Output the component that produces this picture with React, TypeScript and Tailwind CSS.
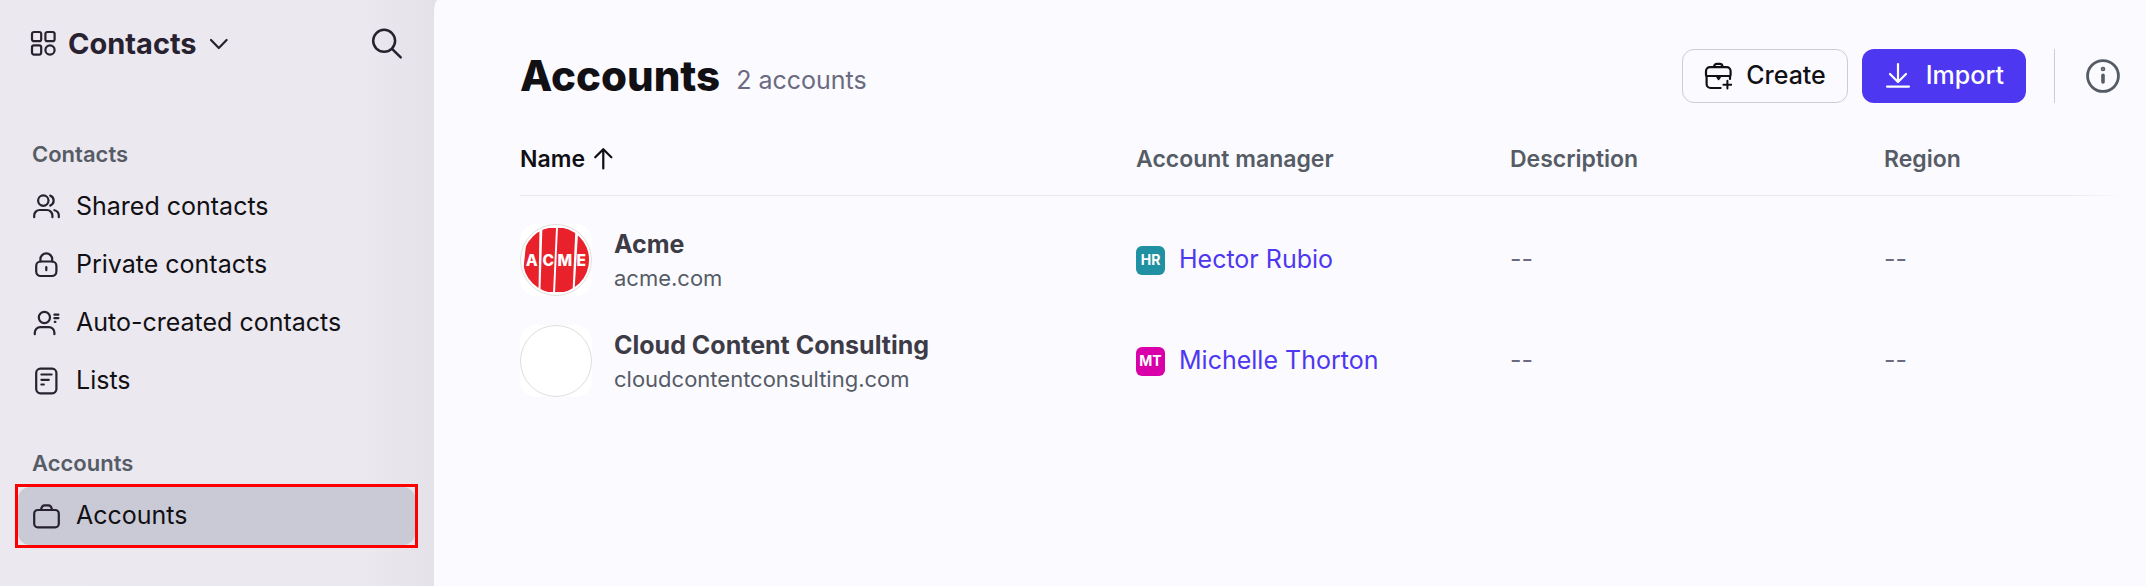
import React from "react";

interface IconProps {
  children: React.ReactNode;
  size?: string;
}

function Icon({ children, size = "size-7" }: IconProps) {
  return (
    <svg
      viewBox="0 0 28 28"
      fill="none"
      stroke="currentColor"
      strokeWidth="2.2"
      strokeLinecap="round"
      strokeLinejoin="round"
      aria-hidden="true"
      className={`${size} shrink-0`}
    >
      {children}
    </svg>
  );
}

const contactLinks = [
  {
    label: "Shared contacts",
    icon: (
      <Icon>
        <circle cx="11.3" cy="7.6" r="5.2" />
        <path d="M18.2 2.6c4.6 1.6 4.6 8.4 0 10" />
        <path d="M2.2 24.2v-1.7a5.5 5.5 0 0 1 5.5-5.5h7.2a5.5 5.5 0 0 1 5.5 5.5v1.7" />
        <path d="M22.4 17.2c2.8.7 4.4 2.8 4.4 5.3v1.7" />
      </Icon>
    ),
  },
  {
    label: "Private contacts",
    icon: (
      <Icon>
        <rect x="4.2" y="10.5" width="20.2" height="14.5" rx="4.5" />
        <path d="M8.4 10.5V8.3a5.9 5.9 0 0 1 11.8 0v2.2" />
        <path d="M14.3 16.2v3" />
      </Icon>
    ),
  },
  {
    label: "Auto-created contacts",
    icon: (
      <Icon>
        <circle cx="12.4" cy="8.5" r="5.6" />
        <path d="M2.8 25.2v-1.5a5.5 5.5 0 0 1 5.5-5.5h8.6a5.5 5.5 0 0 1 5.5 5.5v1.5" />
        <path d="M22.4 5.7h4M22.4 9.2h4M22.8 12.9h.6" />
      </Icon>
    ),
  },
  {
    label: "Lists",
    icon: (
      <Icon>
        <rect x="4.2" y="1.7" width="20.2" height="24.6" rx="4.2" />
        <path d="M9.4 7.5h10.2M9.4 12.8h7.4M9.4 17.5h2.4" />
      </Icon>
    ),
  },
];

const columns = ["Account manager", "Description", "Region"];

const accounts = [
  {
    name: "Acme",
    domain: "acme.com",
    logo: true,
    manager: "Hector Rubio",
    initials: "HR",
    badge: "bg-[#1f91a3]",
  },
  {
    name: "Cloud Content Consulting",
    domain: "cloudcontentconsulting.com",
    logo: false,
    manager: "Michelle Thorton",
    initials: "MT",
    badge: "bg-[#d900a9]",
  },
];

function AcmeLogo() {
  return (
    <svg viewBox="0 0 72 72" className="size-full" role="img" aria-label="Acme">
      <defs>
        <clipPath id="acme-round">
          <circle cx="36" cy="36" r="34" />
        </clipPath>
      </defs>
      <g clipPath="url(#acme-round)">
        <g fill="#e9212b">
          <path d="M7 3h12l-1 66H0z" />
          <path d="M22 3h14l-3 66H20z" />
          <path d="M38 3h18l-3 66H35z" />
          <path d="M59 3h13v66H55z" />
        </g>
        <g
          fill="#fff"
          fontFamily="Inter, sans-serif"
          fontSize="16"
          fontWeight="800"
          textAnchor="middle"
        >
          <text x="11" y="42">A</text>
          <text x="28" y="42">C</text>
          <text x="45" y="42">M</text>
          <text x="62" y="42">E</text>
        </g>
      </g>
    </svg>
  );
}

function Sidebar() {
  return (
    <aside className="w-[434px] shrink-0 bg-linear-to-r from-[#ebe8ef] from-84% to-[#e4e2e8] pt-4 pr-[19px] pl-[18px]">
      <div className="flex h-14 items-center justify-between px-3">
        <button className="flex items-center gap-2.5 text-[29px] font-bold text-[#272130]">
          <Icon>
            <rect x="2" y="2" width="9.2" height="9.2" rx="2" />
            <rect x="15.4" y="2" width="9.2" height="9.2" rx="2" />
            <rect x="2" y="15.4" width="9.2" height="9.2" rx="2" />
            <circle cx="20" cy="20" r="4.6" />
          </Icon>
          Contacts
          <Icon>
            <path d="M4 10l7.8 8 7.8-8" />
          </Icon>
        </button>
        <button aria-label="Search" className="text-[#272130]">
          <Icon size="size-8">
            <circle cx="11.5" cy="11.2" r="9.6" />
            <path d="M18.4 18.2l7.6 7.6" />
          </Icon>
        </button>
      </div>

      <nav>
        <h2 className="mt-[58px] flex h-12 items-center pl-3.5 text-[22px] font-semibold text-[#565c66]">
          Contacts
        </h2>
        <ul>
          {contactLinks.map((link) => (
            <li key={link.label}>
              <a
                href="#"
                className="flex h-[58px] items-center gap-4 rounded-xl pl-3.5 text-[25px] text-[#111014]"
              >
                <span className="text-[#272130]">{link.icon}</span>
                {link.label}
              </a>
            </li>
          ))}
        </ul>

        <h2 className="mt-[29px] flex h-12 items-center pl-3.5 text-[22px] font-semibold text-[#565c66]">
          Accounts
        </h2>
        <ul>
          <li className="outline-3 outline-[#ff0000]">
            <a
              href="#"
              aria-current="page"
              className="flex h-[58px] items-center gap-4 rounded-xl bg-[#cacad6] pl-3.5 text-[25px] text-[#111014]"
            >
              <span className="text-[#272130]">
                <Icon>
                  <rect x="2.2" y="8" width="24.6" height="17.4" rx="3.6" />
                  <path d="M9 8c.4-3 1.6-4.6 3.6-4.6h3.8c2 0 3.2 1.6 3.6 4.6" />
                </Icon>
              </span>
              Accounts
            </a>
          </li>
        </ul>
      </nav>
    </aside>
  );
}

function Toolbar() {
  return (
    <header className="flex h-[54px] items-center justify-between pr-[25px]">
      <div className="flex items-end gap-4">
        <h1 className="text-[42px] leading-[54px] font-extrabold text-[#111014]">
          Accounts
        </h1>
        <p className="text-[25px] leading-[46px] text-[#6a6b80]">2 accounts</p>
      </div>
      <div className="flex h-full items-center">
        <button className="flex h-full items-center gap-3.5 rounded-xl border border-[#cccbd6] px-[21px] text-[25px] font-medium text-[#111014]">
          <Icon>
            <path d="M2 13V9.2a4 4 0 0 1 4-4h16.6a4 4 0 0 1 4 4V13c0 .6-.4 1-1 1H3c-.6 0-1-.4-1-1z" />
            <path d="M2.6 14v8a4 4 0 0 0 4 4h10M26 14v3" />
            <path d="M10 5c0-2 1.2-3.2 3-3.2h2.6c1.8 0 3 1.2 3 3.2" />
            <path d="M13.4 15.2h2.4l-1.2 1.8z" />
            <path d="M23.4 18.8v7.8M19.4 22.7h8" strokeWidth="2" />
          </Icon>
          Create
        </button>
        <button className="ml-3.5 flex h-full items-center gap-3.5 rounded-xl bg-[#4e37f0] px-[22px] text-[25px] font-medium text-white">
          <Icon>
            <path d="M14 2v17.6M6 12l8 8 8-8M3 24.6h22" />
          </Icon>
          Import
        </button>
        <span className="ml-7 h-full w-px bg-[#cccbd6]" />
        <button aria-label="Information" className="ml-[30px] text-[#565c66]">
          <Icon size="size-9">
            <circle cx="14" cy="14" r="12" />
            <circle cx="14" cy="8.6" r=".7" />
            <path d="M14 13.4v5.2" strokeWidth="2.8" />
          </Icon>
        </button>
      </div>
    </header>
  );
}

function AccountsTable() {
  return (
    <div className="relative mt-[21px]">
      <table className="w-full table-fixed text-left">
        <thead>
          <tr className="h-[71px] border-b border-[#e8e7ed] text-[23px] text-[#565c66]">
            <th className="w-[616px] p-0 font-semibold text-[#111014]">
              <button className="flex items-center gap-2">
                Name
                <Icon size="size-6">
                  <path
                    d="M12 25V3.500M2.600 12L12 2.600l9.400 9.400"
                    strokeWidth="2.6"
                  />
                </Icon>
              </button>
            </th>
            {columns.map((column) => (
              <th
                key={column}
                className="w-[374px] p-0 font-semibold last:w-auto"
              >
                {column}
              </th>
            ))}
          </tr>
        </thead>
        <tbody className="before:block before:h-3.5 before:content-['']">
          {accounts.map((account) => (
            <tr key={account.name} className="h-[101px]">
              <td className="p-0">
                <div className="flex items-center gap-[22px]">
                  <div className="size-[72px] rounded-2xl bg-white">
                    <div className="size-full overflow-hidden rounded-full border border-[#dededf]">
                      {account.logo && <AcmeLogo />}
                    </div>
                  </div>
                  <div>
                    <div className="text-[25px] leading-9 font-bold text-[#3d3c46]">
                      {account.name}
                    </div>
                    <div className="text-[22px] leading-8 text-[#565c66]">
                      {account.domain}
                    </div>
                  </div>
                </div>
              </td>
              <td className="p-0">
                <div className="flex items-center gap-3.5">
                  <span
                    className={`${account.badge} flex size-[29px] items-center justify-center rounded-md text-sm font-bold text-white`}
                  >
                    {account.initials}
                  </span>
                  <a href="#" className="text-[25px] text-[#4e37f0]">
                    {account.manager}
                  </a>
                </div>
              </td>
              <td className="p-0 text-[25px] text-[#6a6b80]">--</td>
              <td className="p-0 text-[25px] text-[#6a6b80]">--</td>
            </tr>
          ))}
        </tbody>
      </table>
      <div className="pointer-events-none absolute inset-y-0 right-0 w-[86px] bg-linear-to-r from-transparent to-[#fbfaff] to-75%" />
    </div>
  );
}

export default function App() {
  return (
    <div className="flex min-h-screen bg-[#e4e2e8] font-['Inter',sans-serif]">
      <Sidebar />
      <main className="min-w-0 flex-1 rounded-tl-[4px_12px] bg-[#fbfaff] pt-[49px] pl-[86px]">
        <Toolbar />
        <AccountsTable />
      </main>
    </div>
  );
}
